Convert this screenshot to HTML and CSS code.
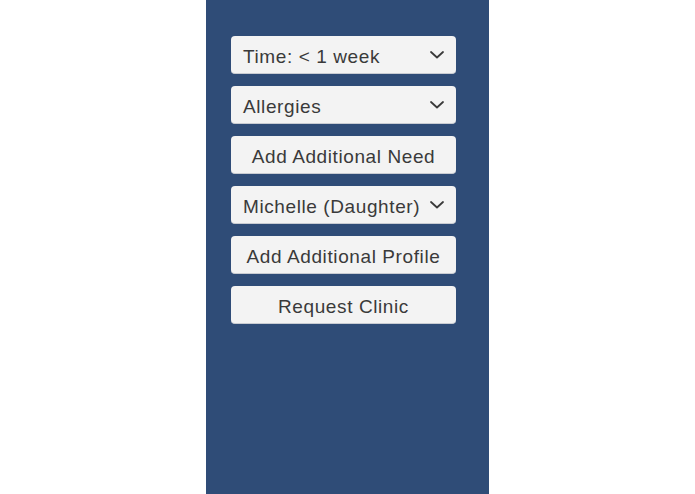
FILE: index.html
```html
<!DOCTYPE html>
<html>
<head>
<meta charset="utf-8">
<link rel="stylesheet" href="styles.css">
</head>
<body>
<div class="page">
  <div class="panel">
    <div class="stack">
      <div class="btn select"><span class="label">Time: &lt; 1 week</span><svg class="chev" viewBox="0 0 14 8"><path d="M1 1 L7 6.5 L13 1" /></svg></div>
      <div class="btn select"><span class="label">Allergies</span><svg class="chev" viewBox="0 0 14 8"><path d="M1 1 L7 6.5 L13 1" /></svg></div>
      <div class="btn center"><span class="label">Add Additional Need</span></div>
      <div class="btn select tight"><span class="label">Michelle (Daughter)</span><svg class="chev" viewBox="0 0 14 8"><path d="M1 1 L7 6.5 L13 1" /></svg></div>
      <div class="btn center"><span class="label">Add Additional Profile</span></div>
      <div class="btn center"><span class="label">Request Clinic</span></div>
    </div>
  </div>
</div>
</body>
</html>
```

FILE: styles.css
```css
html, body {
  margin: 0;
  padding: 0;
  background: #ffffff;
}
.page {
  width: 695px;
  height: 494px;
  display: flex;
  justify-content: flex-start;
}
.panel {
  margin-left: 206px;
  width: 283px;
  height: 494px;
  background: #2f4c77;
  box-sizing: border-box;
  padding: 36px 33px 0 25px;
}
.stack {
  display: flex;
  flex-direction: column;
  gap: 12px;
}
.btn {
  height: 38px;
  box-sizing: border-box;
  background: #f3f3f3;
  border-radius: 4px;
  border-bottom: 1px solid #c9ccd2;
  font-family: "Liberation Sans", Arial, sans-serif;
  font-size: 19px;
  letter-spacing: 0.6px;
  color: #3a3a3a;
  display: flex;
  align-items: center;
}
.label {
  padding-top: 4px;
  white-space: nowrap;
}
.center {
  justify-content: center;
}
.select {
  justify-content: space-between;
  padding: 0 12px 0 12px;
}
.select.tight {
  padding-left: 12px;
  padding-right: 12px;
}
.chev {
  width: 14px;
  height: 8px;
  flex: none;
  margin-top: 1px;
}
.chev path {
  fill: none;
  stroke: #3a3a3a;
  stroke-width: 1.8;
  stroke-linecap: round;
  stroke-linejoin: round;
}
```
